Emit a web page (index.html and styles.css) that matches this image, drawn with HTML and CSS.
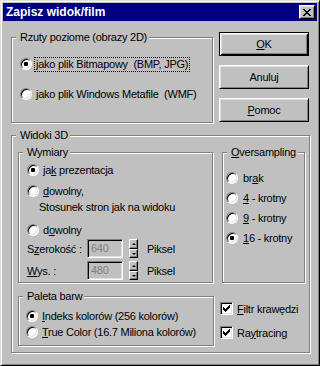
FILE: index.html
```html
<!DOCTYPE html>
<html lang="pl">
<head>
  <meta charset="UTF-8">
  <title>Zapisz widok/film</title>
  <link rel="stylesheet" href="styles.css">
</head>
<body>

  <div class="window">
    <div class="titlebar">
      <span class="title">Zapisz widok/film</span>
      <span class="close-btn">
        <svg width="8" height="7" viewBox="0 0 8 7" shape-rendering="crispEdges">
          <path d="M0 0h2v1H0z M6 0h2v1H6z M1 1h2v1H1z M5 1h2v1H5z M2 2h4v1H2z M3 3h2v1H3z M2 4h4v1H2z M1 5h2v1H1z M5 5h2v1H5z M0 6h2v1H0z M6 6h2v1H6z" fill="#000"/>
        </svg>
      </span>
    </div>

    <div class="dialog">
      <div class="top-row">
        <fieldset class="group group-2d">
          <legend>Rzuty poziome (obrazy 2D)</legend>
          <div class="inner">
            <div class="opt"><span class="radio checked"></span><span class="label focus">jako plik Bitmapowy&nbsp; (BMP, JPG)</span></div>
            <div class="opt"><span class="radio"></span><span class="label"><u>j</u>ako plik Windows Metafile&nbsp; (WMF)</span></div>
          </div>
        </fieldset>

        <div class="buttons">
          <button class="btn default"><u>O</u>K</button>
          <button class="btn">Anuluj</button>
          <button class="btn"><u>P</u>omoc</button>
        </div>
      </div>

      <fieldset class="group group-3d">
        <legend>Widoki 3D</legend>
        <div class="inner">
          <div class="row">
            <fieldset class="group wymiary">
              <legend>Wymiary</legend>
              <div class="inner">
                <div class="opt"><span class="radio checked"></span><span class="label">ja<u>k</u> prezentacja</span></div>
                <div class="opt gap-5"><span class="radio"></span><span class="label"><u>d</u>owolny,</span></div>
                <div class="note">Stosunek stron jak na widoku</div>
                <div class="opt gap-8"><span class="radio"></span><span class="label">d<u>o</u>wolny</span></div>
                <div class="field first">
                  <span class="field-label">S<u>z</u>erokość :</span>
                  <span class="edit">640</span>
                  <span class="spin">
                    <span class="spin-btn up"><i class="arrow-up"></i></span>
                    <span class="spin-btn down"><i class="arrow-down"></i></span>
                  </span>
                  <span class="unit">Piksel</span>
                </div>
                <div class="field">
                  <span class="field-label"><u>W</u>ys. :</span>
                  <span class="edit">480</span>
                  <span class="spin">
                    <span class="spin-btn up"><i class="arrow-up"></i></span>
                    <span class="spin-btn down"><i class="arrow-down"></i></span>
                  </span>
                  <span class="unit">Piksel</span>
                </div>
              </div>
            </fieldset>

            <fieldset class="group oversampling">
              <legend><u>O</u>versampling</legend>
              <div class="inner">
                <div class="opt"><span class="radio"></span><span class="label">br<u>a</u>k</span></div>
                <div class="opt"><span class="radio"></span><span class="label"><u>4</u> - krotny</span></div>
                <div class="opt"><span class="radio"></span><span class="label"><u>9</u> - krotny</span></div>
                <div class="opt"><span class="radio checked"></span><span class="label"><u>1</u>6 - krotny</span></div>
              </div>
            </fieldset>
          </div>

          <div class="row row-bottom">
            <fieldset class="group paleta">
              <legend>Paleta barw</legend>
              <div class="inner">
                <div class="opt"><span class="radio checked"></span><span class="label"><u>I</u>ndeks kolorów (256 kolorów)</span></div>
                <div class="opt"><span class="radio"></span><span class="label"><u>T</u>rue Color (16.7 Miliona kolorów)</span></div>
              </div>
            </fieldset>

            <div class="checks">
              <div class="check-row">
                <span class="check">
                  <svg width="7" height="7" viewBox="0 0 7 7" shape-rendering="crispEdges"><path d="M6 0h1v3H6v1H5v1H4v1H3v1H2V6H1V5H0V2h1v1h1v1h1V3h1V2h1V1h1z" fill="#000"/></svg>
                </span>
                <span class="check-label"><u>F</u>iltr krawędzi</span>
              </div>
              <div class="check-row">
                <span class="check">
                  <svg width="7" height="7" viewBox="0 0 7 7" shape-rendering="crispEdges"><path d="M6 0h1v3H6v1H5v1H4v1H3v1H2V6H1V5H0V2h1v1h1v1h1V3h1V2h1V1h1z" fill="#000"/></svg>
                </span>
                <span class="check-label">Ra<u>y</u>tracing</span>
              </div>
            </div>
          </div>
        </div>
      </fieldset>
    </div>
  </div>

</body>
</html>
```

FILE: styles.css
```css
body {
  margin: 0;
  background: #c0c0c0;
  font-family: "Liberation Sans", Arial, sans-serif;
  font-size: 11px;
  letter-spacing: -0.25px;
  color: #000;
}

u {
  text-decoration: underline;
  text-underline-offset: 1px;
}

.window {
  width: 320px;
  height: 366px;
  box-sizing: border-box;
  background: #c0c0c0;
  border: 1px solid;
  border-color: #dfdfdf #000 #000 #dfdfdf;
  box-shadow: inset 1px 1px #fff, inset -1px -1px #808080;
  padding: 2px;
}

.titlebar {
  height: 18px;
  background: #000080;
  display: flex;
  align-items: center;
  justify-content: space-between;
  padding-left: 3px;
}

.title {
  color: #fff;
  font-weight: bold;
  font-size: 12px;
  letter-spacing: 0;
}

.close-btn {
  width: 16px;
  height: 14px;
  box-sizing: border-box;
  margin-right: 2px;
  border: 1px solid;
  border-color: #fff #000 #000 #fff;
  box-shadow: inset 1px 1px #dfdfdf, inset -1px -1px #808080;
  background: #c0c0c0;
  display: flex;
  align-items: center;
  justify-content: center;
}

.dialog {
  padding-left: 8px;
}

.top-row {
  display: flex;
  align-items: flex-start;
  margin-top: 10px;
}

/* etched group boxes */
.group {
  margin: 0;
  padding: 0;
  min-width: 0;
  box-sizing: border-box;
  border: 1px solid #808080;
  box-shadow: inset 1px 1px #fff, 1px 1px #fff;
}

.group legend {
  margin-left: 4px;
  padding: 0 2px 0 4px;
  line-height: 13px;
  background: #c0c0c0;
}

.inner {
  box-sizing: border-box;
}

.opt {
  display: flex;
  align-items: center;
  height: 16px;
}

.radio {
  flex: none;
  width: 12px;
  height: 12px;
  box-sizing: border-box;
  border-radius: 50%;
  border: 1px solid;
  border-color: #808080 #fff #fff #808080;
  box-shadow: inset 1px 1px #000, inset -1px -1px #dfdfdf;
  background: #fff;
  display: flex;
  align-items: center;
  justify-content: center;
  margin-right: 2px;
}

.radio.checked::after {
  content: "";
  width: 4px;
  height: 4px;
  border-radius: 1px;
  background: #000;
}

.label {
  border: 1px dotted transparent;
  padding: 0 1px;
  line-height: 13px;
  white-space: nowrap;
}

.label.focus {
  border-color: #000;
}

.group-2d {
  width: 202px;
}

.group-2d .inner {
  height: 78px;
  padding: 12px 0 0 8px;
}

.group-2d .opt + .opt {
  margin-top: 14px;
}

.buttons {
  display: flex;
  flex-direction: column;
  margin-left: 6px;
  margin-top: 1px;
}

.btn {
  width: 90px;
  height: 24px;
  box-sizing: border-box;
  padding: 0;
  font: inherit;
  letter-spacing: inherit;
  color: #000;
  background: #c0c0c0;
  border: 1px solid;
  border-color: #fff #000 #000 #fff;
  box-shadow: inset 1px 1px #dfdfdf, inset -1px -1px #808080;
}

.btn + .btn {
  margin-top: 9px;
}

.btn.default {
  border-color: #000;
  box-shadow: inset 1px 1px #fff, inset -1px -1px #000, inset 2px 2px #dfdfdf, inset -2px -2px #808080;
}

.group-3d {
  width: 299px;
  margin-top: 6px;
}

.group-3d > .inner {
  padding: 4px 0 6px 6px;
}

.row {
  display: flex;
  align-items: flex-start;
}

.wymiary {
  width: 195px;
}

.wymiary .inner {
  height: 123px;
  padding: 3px 0 0 8px;
}

.gap-5 {
  margin-top: 5px;
}

.gap-8 {
  margin-top: 8px;
}

.note {
  margin-top: 2px;
  padding-left: 12px;
  line-height: 13px;
  white-space: nowrap;
}

.field {
  display: flex;
  align-items: center;
  height: 19px;
  margin-top: 3px;
}

.field.first {
  margin-top: 1px;
}

.field-label {
  width: 60px;
  white-space: nowrap;
}

.edit {
  width: 36px;
  height: 19px;
  box-sizing: border-box;
  border: 1px solid;
  border-color: #808080 #fff #fff #808080;
  box-shadow: inset 1px 1px #000, inset -1px -1px #dfdfdf;
  background: #c0c0c0;
  color: #808080;
  padding-left: 3px;
  line-height: 17px;
}

.spin {
  display: flex;
  flex-direction: column;
  width: 9px;
  height: 19px;
  margin-left: 6px;
}

.spin-btn {
  box-sizing: border-box;
  border: 1px solid;
  border-color: #fff #000 #000 #fff;
  box-shadow: inset -1px -1px #808080;
  background: #c0c0c0;
  display: flex;
  align-items: center;
  justify-content: center;
}

.spin-btn.up {
  height: 10px;
}

.spin-btn.down {
  height: 9px;
}

.arrow-up {
  width: 0;
  height: 0;
  border-left: 2px solid transparent;
  border-right: 2px solid transparent;
  border-bottom: 2px solid #000;
}

.arrow-down {
  width: 0;
  height: 0;
  border-left: 2px solid transparent;
  border-right: 2px solid transparent;
  border-top: 2px solid #000;
}

.unit {
  margin-left: 9px;
}

.oversampling {
  width: 83px;
  margin-left: 9px;
}

.oversampling .inner {
  height: 123px;
  padding: 9px 0 0 3px;
}

.oversampling .opt {
  height: 20px;
}

.oversampling .radio {
  margin-right: 3px;
}

.row-bottom {
  margin-top: 7px;
}

.paleta {
  width: 196px;
}

.paleta .inner {
  height: 42px;
  padding: 5px 0 0 7px;
}

.checks {
  margin-left: 6px;
  padding-top: 10px;
}

.check-row {
  display: flex;
  align-items: center;
  height: 17px;
}

.check-row + .check-row {
  margin-top: 7px;
}

.check {
  flex: none;
  width: 13px;
  height: 13px;
  box-sizing: border-box;
  border: 1px solid;
  border-color: #808080 #fff #fff #808080;
  box-shadow: inset 1px 1px #000, inset -1px -1px #dfdfdf;
  background: #fff;
  display: flex;
  align-items: center;
  justify-content: center;
  margin-right: 4px;
}

.check-label {
  white-space: nowrap;
}
```
